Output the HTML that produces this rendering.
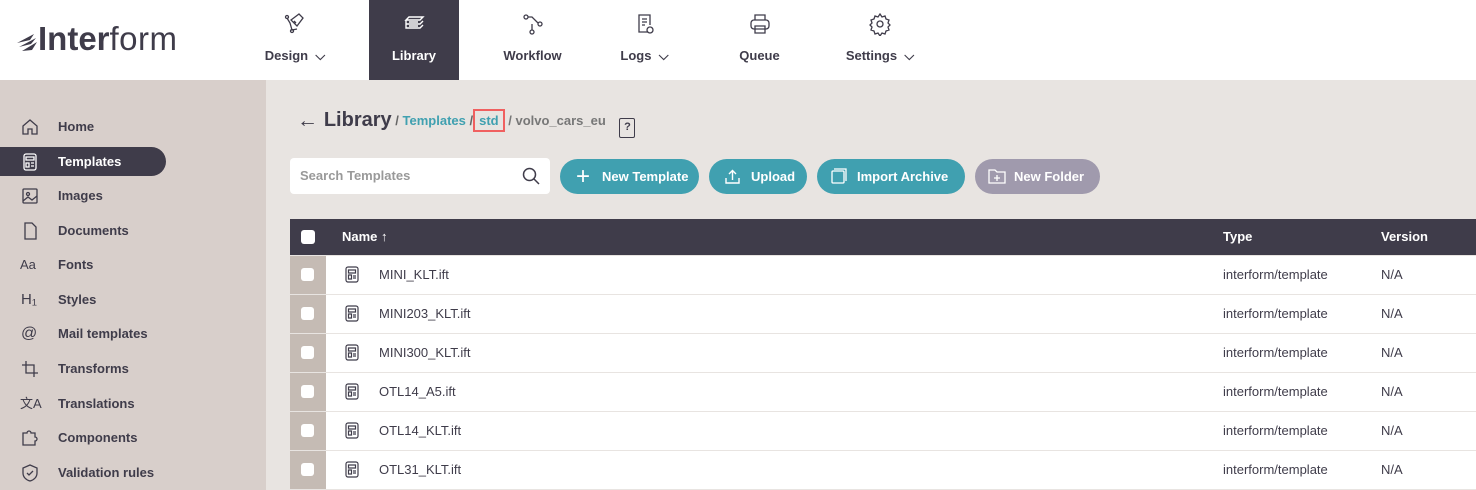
<!DOCTYPE html>
<html><head><style>
*{box-sizing:border-box;margin:0;padding:0}
body{width:1476px;height:490px;overflow:hidden;font-family:"Liberation Sans",sans-serif;background:#e8e4e1;position:relative;color:#3f3c4a}
.top{position:absolute;left:0;top:0;width:1476px;height:80px;background:#fff}
.logo{position:absolute;left:16px;top:20px;font-size:33px;color:#3f3c4a;letter-spacing:0px}
.logo b{font-weight:bold}
.logo span{font-weight:normal;letter-spacing:0.5px}
.nav{position:absolute;top:0;height:80px;text-align:center;font-size:13px;font-weight:bold;color:#3f3c4a}
.nav .ic{position:absolute;top:12px;left:50%;margin-left:-12px;width:24px;height:24px}
.nav .lb{position:absolute;top:48px;left:0;right:0}
.side{position:absolute;left:0;top:80px;width:266px;height:410px;background:#d8cfcb}
.si{position:absolute;left:0;height:29px;width:166px;font-size:13px;font-weight:bold;color:#3f3c4a;padding-left:58px;line-height:29px}
.si.act{background:#3f3c4a;color:#fff;border-radius:0 15px 15px 0}
.si svg{position:absolute;left:21px;top:6px}
.bc{position:absolute;left:297px;top:109px;font-size:13px;font-weight:bold}
.btn{position:absolute;top:159px;height:35px;border-radius:18px;background:#40a0b0;color:#fff;font-size:13px;font-weight:bold;line-height:35px}
.search{position:absolute;left:290px;top:158px;width:260px;height:36px;background:#fff;border-radius:4px;font-size:13px;color:#999;line-height:36px;padding-left:10px;font-weight:bold}
.th{position:absolute;left:290px;top:219px;width:1186px;height:36px;background:#3f3c4a;color:#fff;font-size:13px;font-weight:bold;line-height:36px}
.row{position:absolute;left:290px;width:1186px;height:38px;background:#fff;font-size:13px;line-height:38px;color:#3f3c4a}
.row .cb{position:absolute;left:0;top:0;width:36px;height:38px;background:#c5bbb4}
.chk{position:absolute;width:13px;height:13px;background:#fff;border-radius:3px;left:11px;top:12px}
</style></head><body>
<div class="top">
<div class="logo"><svg width="22" height="22" viewBox="0 0 22 22" style="vertical-align:-2px"><path d="M1 13 L18 4 L14 10 Z M3 17 L20 8 L15 14 Z M6 21 L21 12 L16 20 Z" fill="#3f3c4a"/></svg><b>Inter</b><span>form</span></div>
<div class="nav" style="left:255px;width:80px"><svg class="ic" viewBox="0 0 24 24" fill="none" stroke="#3f3c4a" stroke-width="1.3"><path d="M8 8l8-6 4 4-6 8zM4 6l3 5 2 7 5-1M11 9l2 2"/><circle cx="4" cy="5" r="1.5"/><circle cx="9" cy="19" r="1.5"/></svg><div class="lb">Design &nbsp;⌵</div></div>
<div class="nav" style="left:369px;width:90px;background:#3f3c4a;color:#fff"><svg class="ic" viewBox="0 0 24 24" fill="none" stroke="#fff" stroke-width="1.4"><path d="M4 8h14l3-3H7zM4 8v4h14l3-3M4 12v4h14l3-3M7 10h9M7 14h9"/></svg><div class="lb">Library</div></div>
<div class="nav" style="left:495px;width:75px"><svg class="ic" viewBox="0 0 24 24" fill="none" stroke="#3f3c4a" stroke-width="1.3"><circle cx="5" cy="5" r="2"/><circle cx="19" cy="12" r="2"/><circle cx="11" cy="20" r="2"/><path d="M7 5h4l6 6M11 18v-6"/></svg><div class="lb">Workflow</div></div>
<div class="nav" style="left:607px;width:75px"><svg class="ic" viewBox="0 0 24 24" fill="none" stroke="#3f3c4a" stroke-width="1.3"><path d="M15 20H6V3h11v10M9 7h5M9 10h5M9 13h3"/><circle cx="17" cy="18" r="3"/></svg><div class="lb">Logs &nbsp;⌵</div></div>
<div class="nav" style="left:722px;width:75px"><svg class="ic" viewBox="0 0 24 24" fill="none" stroke="#3f3c4a" stroke-width="1.3"><rect x="3" y="8" width="18" height="9" rx="3"/><path d="M7 8V3h10v5M7 14h10v7H7z"/></svg><div class="lb">Queue</div></div>
<div class="nav" style="left:835px;width:90px"><svg class="ic" viewBox="0 0 24 24" fill="none" stroke="#3f3c4a" stroke-width="1.3"><circle cx="12" cy="12" r="3"/><path d="M12 2l2 3 3-1 1 3 3 1-1 3 2 2-2 2 1 3-3 1-1 3-3-1-2 3-2-3-3 1-1-3-3-1 1-3-2-2 2-2-1-3 3-1 1-3 3 1z"/></svg><div class="lb">Settings &nbsp;⌵</div></div>
</div>
<div class="side">
<div class="si" style="top:32px"><svg width="18" height="18" viewBox="0 0 18 18" fill="none" stroke="#3f3c4a" stroke-width="1.3"><path d="M2 8l7-6 7 6v8h-5v-5H7v5H2z"/></svg>Home</div>
<div class="si act" style="top:67px"><svg width="18" height="18" viewBox="0 0 18 18" fill="none" stroke="#fff" stroke-width="1.3"><rect x="3" y="1" width="12" height="16" rx="2"/><path d="M5 4h8v3H5zM5 10h3v4H5zM10 10h3M10 13h3"/></svg>Templates</div>
<div class="si" style="top:101px"><svg width="18" height="18" viewBox="0 0 18 18" fill="none" stroke="#3f3c4a" stroke-width="1.3"><rect x="2" y="2" width="14" height="14" rx="1"/><circle cx="7" cy="7" r="1.5"/><path d="M2 14l5-4 4 3 5-4"/></svg>Images</div>
<div class="si" style="top:136px"><svg width="18" height="18" viewBox="0 0 18 18" fill="none" stroke="#3f3c4a" stroke-width="1.3"><path d="M4 1h7l4 4v12H4z"/></svg>Documents</div>
<div class="si" style="top:170px"><span style="position:absolute;left:20px;font-weight:normal">Aa</span>Fonts</div>
<div class="si" style="top:205px"><span style="position:absolute;left:21px;font-weight:normal;font-size:15px">H₁</span>Styles</div>
<div class="si" style="top:239px"><span style="position:absolute;left:21px;font-weight:normal;font-size:16px">@</span>Mail templates</div>
<div class="si" style="top:274px"><svg width="18" height="18" viewBox="0 0 18 18" fill="none" stroke="#3f3c4a" stroke-width="1.3"><path d="M5 1v12h12M1 5h12v12"/></svg>Transforms</div>
<div class="si" style="top:309px"><span style="position:absolute;left:20px;font-weight:normal">文A</span>Translations</div>
<div class="si" style="top:343px"><svg width="18" height="18" viewBox="0 0 18 18" fill="none" stroke="#3f3c4a" stroke-width="1.3"><path d="M2 4h4a2 2 0 014 0h4v4a2 2 0 010 4v4H2z"/></svg>Components</div>
<div class="si" style="top:378px"><svg width="18" height="18" viewBox="0 0 18 18" fill="none" stroke="#3f3c4a" stroke-width="1.3"><path d="M9 1l7 3v5c0 4-3 7-7 8-4-1-7-4-7-8V4z"/><path d="M6 9l2 2 4-4"/></svg>Validation rules</div>
</div>
<div class="bc"><span style="font-size:21px;vertical-align:-2px">← </span><span style="font-size:20px;vertical-align:-1px">Library</span> <span style="color:#666">/</span> <span style="color:#40a0b0">Templates</span> <span style="color:#666">/</span><span style="color:#40a0b0;border:2px solid #f06060;padding:2px 4px">std</span> <span style="color:#777">/ volvo_cars_eu</span> <span style="display:inline-block;margin-left:10px;width:16px;height:20px;border:1.5px solid #3f3c4a;border-radius:2px;font-size:11px;text-align:center;line-height:17px;vertical-align:-5px">?</span></div>
<div class="search">Search Templates<svg style="position:absolute;right:10px;top:9px" width="18" height="18" viewBox="0 0 18 18" fill="none" stroke="#3f3c4a" stroke-width="1.5"><circle cx="7.5" cy="7.5" r="6"/><path d="M12 12l5 5"/></svg></div>
<div class="btn" style="left:560px;width:139px;padding-left:42px"><span style="position:absolute;left:16px;font-size:24px;font-weight:normal">+</span>New Template</div>
<div class="btn" style="left:709px;width:98px;padding-left:42px"><svg style="position:absolute;left:16px;top:10px" width="15" height="15" viewBox="0 0 15 15" fill="none" stroke="#fff" stroke-width="1.4"><path d="M1 9v5h13V9M7.5 11V2M4 5l3.5-3.5L11 5"/></svg>Upload</div>
<div class="btn" style="left:817px;width:148px;padding-left:40px"><svg style="position:absolute;left:14px;top:9px" width="16" height="16" viewBox="0 0 16 16" fill="none" stroke="#fff" stroke-width="1.3"><rect x="1" y="3" width="12" height="12" rx="1"/><path d="M3 1h12v12"/></svg>Import Archive</div>
<div class="btn" style="left:975px;width:125px;padding-left:39px;background:#a09aad"><svg style="position:absolute;left:13px;top:9px" width="18" height="16" viewBox="0 0 18 16" fill="none" stroke="#fff" stroke-width="1.3"><path d="M1 2h6l2 2h8v11H1zM9 7v6M6 10h6"/></svg>New Folder</div>
<div class="th"><div class="chk" style="left:11px;top:11px;width:14px;height:14px"></div><span style="position:absolute;left:52px">Name ↑</span><span style="position:absolute;left:933px">Type</span><span style="position:absolute;left:1091px">Version</span></div>
<div class="row" style="top:256px"><div class="cb"><div class="chk"></div></div><span style="position:absolute;left:89px">MINI_KLT.ift</span><span style="position:absolute;left:933px">interform/template</span><span style="position:absolute;left:1091px">N/A</span></div>
<div class="row" style="top:295px"><div class="cb"><div class="chk"></div></div><span style="position:absolute;left:89px">MINI203_KLT.ift</span><span style="position:absolute;left:933px">interform/template</span><span style="position:absolute;left:1091px">N/A</span></div>
<div class="row" style="top:334px"><div class="cb"><div class="chk"></div></div><span style="position:absolute;left:89px">MINI300_KLT.ift</span><span style="position:absolute;left:933px">interform/template</span><span style="position:absolute;left:1091px">N/A</span></div>
<div class="row" style="top:373px"><div class="cb"><div class="chk"></div></div><span style="position:absolute;left:89px">OTL14_A5.ift</span><span style="position:absolute;left:933px">interform/template</span><span style="position:absolute;left:1091px">N/A</span></div>
<div class="row" style="top:412px"><div class="cb"><div class="chk"></div></div><span style="position:absolute;left:89px">OTL14_KLT.ift</span><span style="position:absolute;left:933px">interform/template</span><span style="position:absolute;left:1091px">N/A</span></div>
<div class="row" style="top:451px"><div class="cb"><div class="chk"></div></div><span style="position:absolute;left:89px">OTL31_KLT.ift</span><span style="position:absolute;left:933px">interform/template</span><span style="position:absolute;left:1091px">N/A</span></div>
<svg style="position:absolute;left:0;top:0;pointer-events:none" width="1476" height="490">
<g fill="none" stroke="#3f3c4a" stroke-width="1.2">
<g id="fi"><rect x="346" y="267" width="12" height="15" rx="2"/><path d="M348.5 270h7v3h-7zM348.5 275h3v4h-3zM353 276h3M353 278h3"/></g>
<use href="#fi" y="39"/><use href="#fi" y="78"/><use href="#fi" y="117"/><use href="#fi" y="156"/><use href="#fi" y="195"/>
</g></svg>
</body></html>
